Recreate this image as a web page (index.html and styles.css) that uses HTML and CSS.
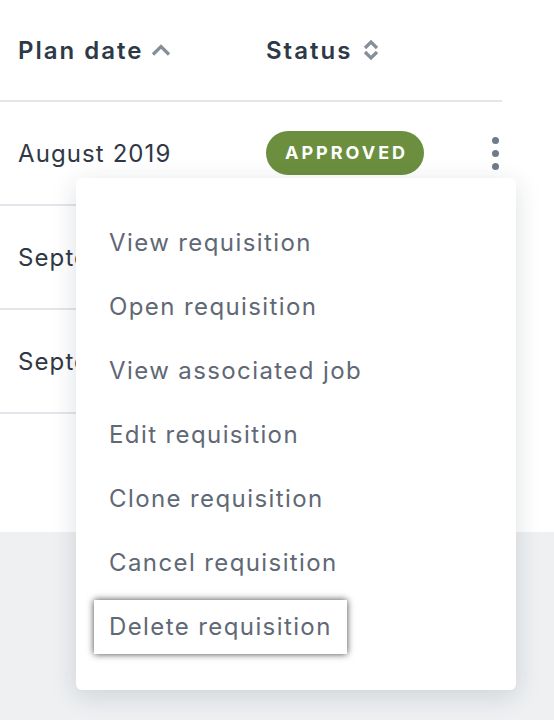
FILE: index.html
```html
<!DOCTYPE html>
<html lang="en">

<head>
    <meta charset="UTF-8">
    <meta name="viewport" content="width=device-width, initial-scale=1.0">
    <title>Requisitions</title>
    <link rel="stylesheet" href="styles.css">
</head>

<body>
    <div class="card">
        <div class="table">
            <div class="row head">
                <div class="cell">Plan date
                    <svg class="sort" width="22" height="14" viewBox="0 0 22 14">
                        <path d="M3 11.5 L11 3.5 L19 11.5" />
                    </svg>
                </div>
                <div class="cell">Status
                    <svg class="sort both" width="16" height="24" viewBox="0 0 16 24">
                        <path d="M2 10 L8 4 L14 10" />
                        <path d="M2 14 L8 20 L14 14" />
                    </svg>
                </div>
                <div class="cell"></div>
            </div>
            <div class="row">
                <div class="cell">August 2019</div>
                <div class="cell"><span class="badge">Approved</span></div>
                <div class="cell actions">
                    <button class="kebab"><i></i><i></i><i></i></button>
                </div>
            </div>
            <div class="row">
                <div class="cell">September 2019</div>
                <div class="cell"><span class="badge">Approved</span></div>
                <div class="cell actions"></div>
            </div>
            <div class="row">
                <div class="cell">September 2019</div>
                <div class="cell"><span class="badge">Approved</span></div>
                <div class="cell actions"></div>
            </div>
        </div>

        <ul class="menu">
            <li><a href="#">View requisition</a></li>
            <li><a href="#">Open requisition</a></li>
            <li><a href="#">View associated job</a></li>
            <li><a href="#">Edit requisition</a></li>
            <li><a href="#">Clone requisition</a></li>
            <li><a href="#">Cancel requisition</a></li>
            <li><a href="#" class="focus">Delete requisition</a></li>
        </ul>
    </div>
</body>

</html>
```

FILE: styles.css
```css
html,
body {
    min-height: 100%;
}

body {
    margin: 0;
    min-height: 720px;
    background: #eef0f2;
    font-family: "Inter", "Liberation Sans", sans-serif;
    color: #2f3844;
}

.card {
    position: relative;
    background: #fff;
    height: 532px;
    padding-right: 52px;
}

.row {
    display: grid;
    grid-template-columns: 248px 1fr 60px;
    height: 102px;
    padding-left: 18px;
    border-bottom: 2px solid #e3e6ea;
    align-items: center;
    font-size: 24px;
    letter-spacing: 1.1px;
}

.row.head {
    height: 100px;
    font-weight: 600;
    letter-spacing: 2px;
    color: #2e3947;
}

.cell {
    display: flex;
    align-items: center;
    white-space: nowrap;
}

.sort {
    margin-left: 7px;
    fill: none;
    stroke: #868e9a;
    stroke-width: 3.2;
}

.sort.both {
    margin-left: 11px;
}

.badge {
    display: inline-block;
    height: 44px;
    line-height: 44px;
    padding: 0 16px 0 19px;
    border-radius: 22px;
    background: #6b8f3e;
    color: #fff;
    font-size: 18px;
    font-weight: 700;
    letter-spacing: 3px;
    text-transform: uppercase;
}

.actions {
    justify-content: flex-end;
}

.kebab {
    display: flex;
    flex-direction: column;
    gap: 6px;
    padding: 0;
    margin-right: 3px;
    border: 0;
    background: none;
    cursor: pointer;
}

.kebab i {
    width: 7px;
    height: 7px;
    border-radius: 50%;
    background: #707b8a;
}

.menu {
    position: absolute;
    left: 76px;
    top: 178px;
    width: 440px;
    margin: 0;
    padding: 33px 18px 31px;
    list-style: none;
    background: #fff;
    border-radius: 6px;
    box-shadow: 0 6px 26px rgba(30, 40, 60, 0.15);
    box-sizing: border-box;
}

.menu li {
    height: 64px;
    padding-top: 5px;
    box-sizing: border-box;
}

.menu a {
    display: inline-block;
    height: 54px;
    line-height: 54px;
    padding: 0 15px;
    font-size: 24px;
    letter-spacing: 1.4px;
    color: #5f6875;
    text-decoration: none;
}

.menu a.focus {
    box-shadow: 0 0 7px rgba(0, 0, 0, 0.75);
}
```
